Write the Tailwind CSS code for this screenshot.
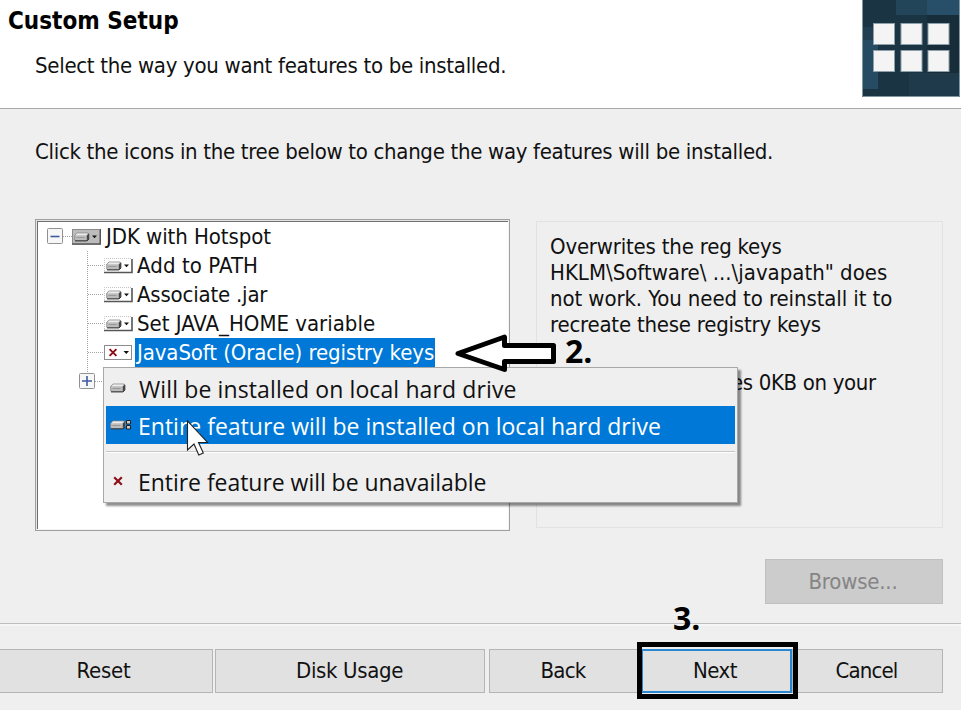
<!DOCTYPE html>
<html lang="en">
<head>
<meta charset="utf-8">
<title>Custom Setup</title>
<script src="https://cdn.jsdelivr.net/npm/@tailwindcss/browser@4"></script>
</head>
<body class="relative w-[961px] h-[710px] overflow-hidden bg-[#efefef] text-[#111] font-['DejaVu_Sans_Condensed','DejaVu_Sans',sans-serif] text-[22px] leading-[26px] whitespace-nowrap">

<svg class="hidden">
  <symbol id="drive" viewBox="0 0 16 10">
    <path d="M3 1H14L15.2 2V6.500L13 8.600H1.200L.7 8V3.200Z" fill="#bcbcbc" stroke="#858585" stroke-width=".8"/>
    <path d="M3 1.600H13.500L12.300 3.300H1.400Z" fill="#ececec"/>
    <path d="M12.800 3.500L15 1.500V6.500L12.800 8.500Z" fill="#444"/>
    <path d="M2.500 5.500H10.500" stroke="#989898"/>
    <path d="M1 8.900H13L15.200 6.800" stroke="#333" fill="none"/>
  </symbol>
  <symbol id="feature" viewBox="0 0 29 16">
    <rect width="29" height="16" fill="#fff"/>
    <path d="M.5 13V.5H27" fill="none" stroke="#c4c4c4" stroke-dasharray="1 1"/>
    <path d="M0 14.500H28V1" fill="none" stroke="#555" stroke-width="1.600"/>
    <use href="#drive" x="2" y="3" width="16" height="10"/>
    <path d="M20 6.500H25L22.500 9.300Z" fill="#111"/>
  </symbol>
  <symbol id="cross" viewBox="0 0 10 10">
    <path d="M1.200 1.200L8.800 8.800M8.800 1.200L1.200 8.800" stroke="#8c1018" stroke-width="2.200"/>
  </symbol>
</svg>

<header class="flex justify-between h-[109px] bg-white border-b border-[#a9a9a9]">
  <div class="pt-[8px] pl-[8px]">
    <h1 class="text-[24px] font-bold text-black">Custom Setup</h1>
    <p class="pl-[27px] mt-[19px] tracking-[-0.29px]">Select the way you want features to be installed.</p>
  </div>
  <svg class="mr-px" width="98" height="97" viewBox="0 0 98 97">
    <rect width="98" height="97" fill="#1b3443"/>
    <path d="M34 0H65V15H34Z" fill="#22455a"/>
    <path d="M65 0H98V15H65Z" fill="#284f69"/>
    <path d="M0 27H16V40H0Z" fill="#213f50"/>
    <path d="M0 40H16V89H0Z" fill="#264c63"/>
    <path d="M65 15H98V73H65Z" fill="#172d3a"/>
    <path d="M47 73H98V97H47Z" fill="#1f3b4b"/>
    <path d="M.5 0V96.500H97.500V0" fill="none" stroke="#8296a0"/>
    <g fill="#f4f4f4" stroke="#8da0aa" stroke-width="1">
      <rect x="11.500" y="23.500" width="21" height="21"/><rect x="39" y="23.500" width="21" height="21"/><rect x="66" y="23.500" width="21" height="21"/>
      <rect x="11.500" y="50.500" width="21" height="21"/><rect x="39" y="50.500" width="21" height="21"/><rect x="66" y="50.500" width="21" height="21"/>
    </g>
  </svg>
</header>

<main class="h-[515px] border-b border-[#bdbdbd] pt-[30px] pl-[35px] pr-[18px]">
  <p class="tracking-[-0.31px]">Click the icons in the tree below to change the way features will be installed.</p>
  <div class="flex justify-between mt-[54px]">
    <section class="relative w-[475px] h-[312px] bg-white border border-[#a0a0a0]">
      <div class="absolute inset-0 border border-t-[#e3e3e3] border-l-[#e3e3e3] border-r-[#f4f4f4] border-b-[#f4f4f4]"></div>
      <div class="absolute inset-px border-t border-l border-[#707070]"></div>
      <svg class="absolute left-0 top-0" width="110" height="180" viewBox="36 220 110 180" fill="none">
        <path d="M63 236.500H72M87.500 251V373M88 265.500H103M88 294.500H103M88 323.500H103M88 352.500H103M95 381.500H103" stroke="#a4a4a4" stroke-dasharray="1 1"/>
        <rect x="47.500" y="228.500" width="15" height="15" rx="1" fill="#f7f7f8" stroke="#929292"/>
        <path d="M50.500 236.500H59.500" stroke="#3f5aa0" stroke-width="1.600"/>
        <rect x="79.500" y="373.500" width="15" height="15" rx="1" fill="#f7f7f8" stroke="#929292"/>
        <path d="M82 381H92M87 376V386" stroke="#3f5aa0" stroke-width="1.600"/>
      </svg>
      <ul class="relative pt-[2px]">
        <li class="flex items-center h-[29px] pl-[36px]">
          <svg width="29" height="16" viewBox="0 0 29 16"><rect width="29" height="16" fill="#bcbcbc"/><path d="M0 15H28.300V0" fill="none" stroke="#555" stroke-width="1.600"/><path d="M.5 14V.5H28" fill="none" stroke="#8a8a8a"/><use href="#drive" x="2" y="3" width="16" height="10"/><path d="M20 6.500H25L22.500 9.300Z" fill="#111"/></svg>
          <span class="pl-[5px] tracking-[-0.07px]">JDK with Hotspot</span>
        </li>
        <li class="flex items-center h-[29px] pl-[68px]"><svg width="29" height="16"><use href="#feature"/></svg><span class="pl-[4px] tracking-[0.09px]">Add to PATH</span></li>
        <li class="flex items-center h-[29px] pl-[68px]"><svg width="29" height="16"><use href="#feature"/></svg><span class="pl-[4px] tracking-[-0.2px]">Associate .jar</span></li>
        <li class="flex items-center h-[29px] pl-[68px]"><svg width="29" height="16"><use href="#feature"/></svg><span class="pl-[4px]">Set JAVA_HOME variable</span></li>
        <li class="flex items-center h-[29px] pl-[68px]">
          <svg width="28" height="15" viewBox="0 0 28 15"><rect x=".5" y=".5" width="27" height="14" fill="#fff" stroke="#8c8c8c"/><use href="#cross" x="4.500" y="3" width="9" height="9"/><path d="M19.500 6H25L22.250 9Z" fill="#111"/></svg>
          <span class="h-[29px] w-[300px] leading-[29px] ml-[3px] pl-[2px] bg-[#0078d7] text-white tracking-[-0.1px]">JavaSoft (Oracle) registry keys</span>
        </li>
      </ul>
    </section>
    <section class="w-[407px] h-[307px] mt-[2px] border border-[#e2e2e2] pt-[12px] pl-[13px]">
      <p class="tracking-[-0.2px]">Overwrites the reg keys</p>
      <p>HKLM\Software\ ...\javapath" does</p>
      <p class="tracking-[-0.1px]">not work. You need to reinstall it to</p>
      <p class="tracking-[-0.22px]">recreate these registry keys</p>
      <p class="mt-[32px] pl-[181px] tracking-[-0.35px]">es 0KB on your</p>
    </section>
  </div>
  <div class="flex justify-end mt-[28px]">
    <button class="w-[178px] h-[45px] bg-[#ccc] border border-[#c0c0c0] text-[#858585] pr-[2px] tracking-[-0.2px]">Browse...</button>
  </div>
</main>

<footer class="flex h-[86px] border-t-2 border-[#f6f6f6] pt-[23px]">
  <button class="w-[213px] h-[44px] bg-[#e1e1e1] border border-l-0 border-[#b5b5b5] pr-[5px] tracking-[-0.25px]">Reset</button>
  <button class="ml-[2px] w-[270px] h-[44px] bg-[#e1e1e1] border border-[#b5b5b5] pr-[1px] tracking-[-0.35px]">Disk Usage</button>
  <button class="ml-[4px] w-[151px] h-[44px] bg-[#e1e1e1] border border-[#b5b5b5] pr-[3px] tracking-[-0.7px]">Back</button>
  <button class="ml-px w-[151px] h-[44px] bg-[#e1e1e1] border-2 border-[#2a86cf] pr-[3px] tracking-[-0.5px]">Next</button>
  <button class="w-[151px] h-[44px] bg-[#e1e1e1] border border-[#b5b5b5] pr-[2px] tracking-[-0.85px]">Cancel</button>
</footer>

<menu class="absolute left-[103px] top-[367px] w-[635px] h-[136px] bg-[#efefef] border border-[#a8a8a8] shadow-[3px_3px_2px_#00000070] p-[2px] font-['Open_Sans','Noto_Sans',sans-serif] text-[23px]">
  <li class="flex items-center h-[36px] pl-[4px]"><svg class="mb-[1px]" width="16" height="10"><use href="#drive"/></svg><span class="pl-[13px] tracking-[0.12px] mt-[2px]">Will be installed on local hard drive</span></li>
  <li class="flex items-center h-[38px] w-[629px] pl-[4px] bg-[#0078d7] text-white">
    <svg width="22" height="10" viewBox="0 0 22 10"><use href="#drive" width="16" height="10"/><path d="M16.500 .5H20.500V4H16.500ZM16.500 5.500H20.500V9H16.500Z" fill="#ccc" stroke="#222"/></svg>
    <span class="pl-[6px] pt-[2px]">Entire feature will be installed on local hard drive</span>
  </li>
  <li class="h-[2px] mt-[7px] bg-[#c6c6c6] border-b border-white"></li>
  <li class="flex items-center h-[36px] mt-[11px] pl-[7px]"><svg class="mb-[2px]" width="10" height="10"><use href="#cross"/></svg><span class="pl-[15px] tracking-[-0.04px]">Entire feature will be unavailable</span></li>
</menu>

<svg class="absolute left-[186px] top-[419px]" width="24" height="38" viewBox="0 0 24 38">
  <path d="M1.500 2V31L8 25L12.800 36L17.300 34L12.500 23.500H21.500Z" fill="#fff" stroke="#222" stroke-width="1.100"/>
</svg>
<svg class="absolute left-[450px] top-[330px]" width="110" height="46" viewBox="450 330 110 46">
  <path d="M458 353.500L504.500 337V345.500H553.500V361.500H504.500V369.500Z" fill="#fff" stroke="#000" stroke-width="5" stroke-linejoin="round"/>
</svg>
<strong class="absolute left-[565px] top-[338px] font-['Open_Sans',sans-serif] text-[32px] leading-[25px] text-black">2.</strong>
<strong class="absolute left-[673px] top-[604px] font-['Open_Sans',sans-serif] text-[32px] leading-[28px] text-black">3.</strong>
<div class="absolute left-[637px] top-[642px] w-[161px] h-[57px] border-5 border-black"></div>
</body>
</html>
